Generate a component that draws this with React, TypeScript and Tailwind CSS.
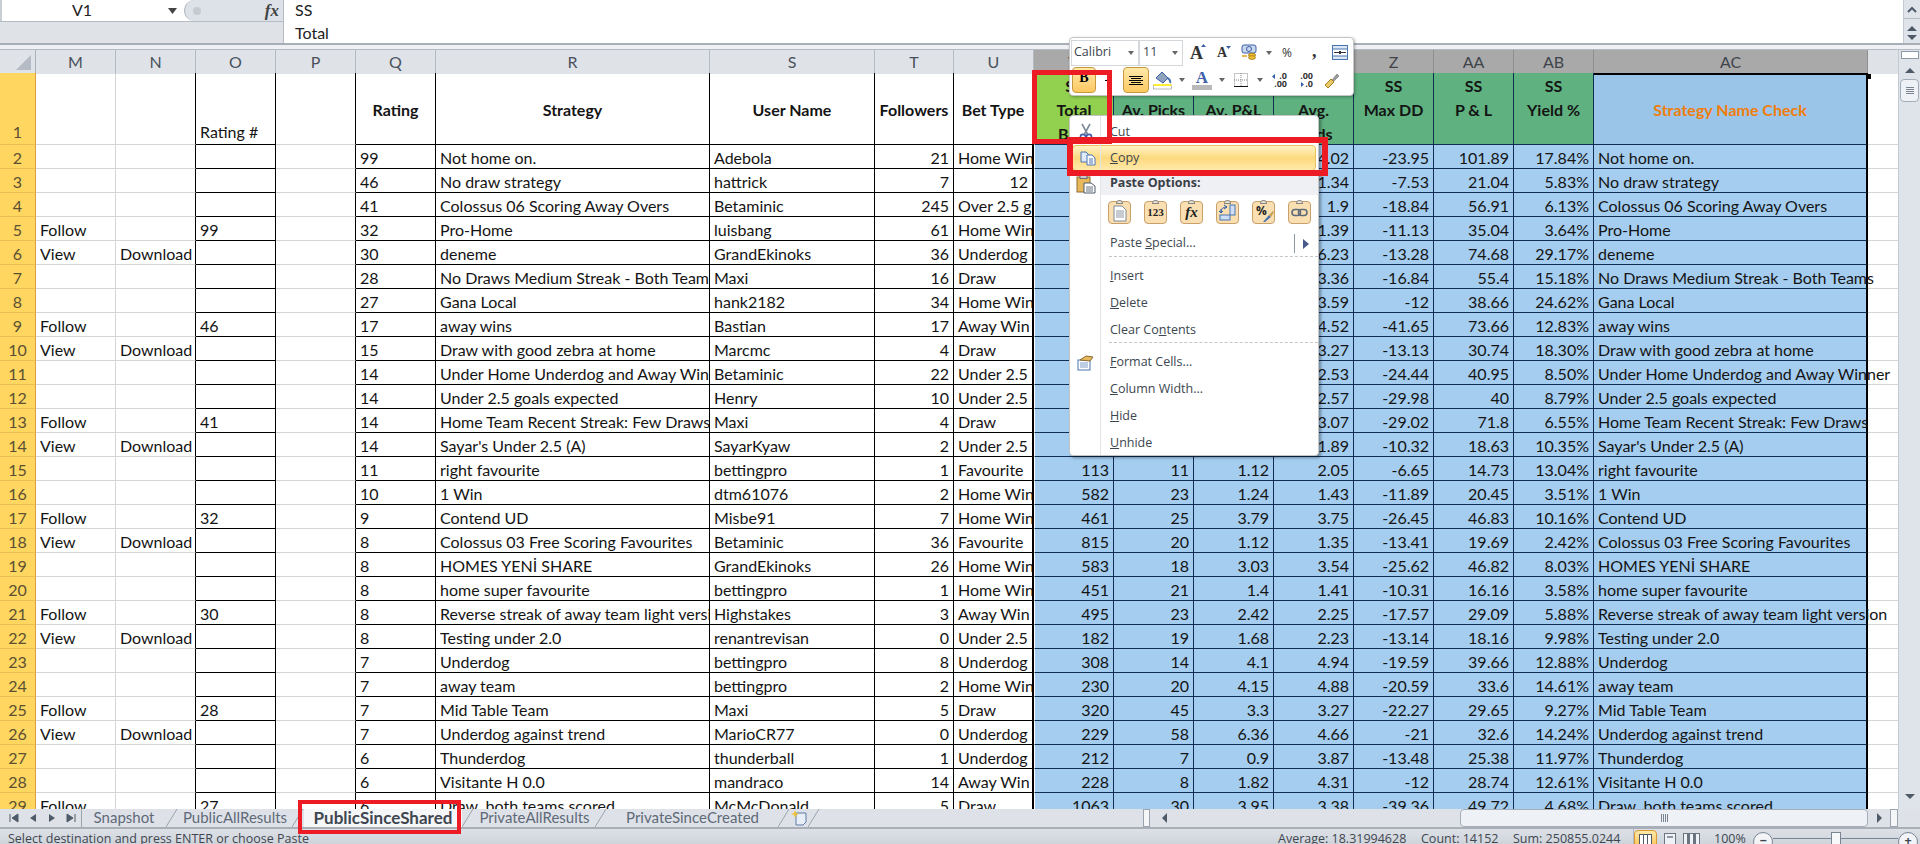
import React from "react";

// M N O P Q R S T U V W X Y Z AA AB AC
const rows: string[][] = [
  ["", "", "", "", "99", "Not home on.", "Adebola", "21", "Home Win", "", "", "", "4.02", "-23.95", "101.89", "17.84%", "Not home on."],
  ["", "", "", "", "46", "No draw strategy", "hattrick", "7", "12", "", "", "", "1.34", "-7.53", "21.04", "5.83%", "No draw strategy"],
  ["", "", "", "", "41", "Colossus 06 Scoring Away Overs", "Betaminic", "245", "Over 2.5 goals", "", "", "", "1.9", "-18.84", "56.91", "6.13%", "Colossus 06 Scoring Away Overs"],
  ["Follow", "", "99", "", "32", "Pro-Home", "luisbang", "61", "Home Win", "", "", "", "1.39", "-11.13", "35.04", "3.64%", "Pro-Home"],
  ["View", "Download", "", "", "30", "deneme", "GrandEkinoks", "36", "Underdog", "", "", "", "6.23", "-13.28", "74.68", "29.17%", "deneme"],
  ["", "", "", "", "28", "No Draws Medium Streak - Both Teams", "Maxi", "16", "Draw", "", "", "", "3.36", "-16.84", "55.4", "15.18%", "No Draws Medium Streak - Both Teams"],
  ["", "", "", "", "27", "Gana Local", "hank2182", "34", "Home Win", "", "", "", "3.59", "-12", "38.66", "24.62%", "Gana Local"],
  ["Follow", "", "46", "", "17", "away wins", "Bastian", "17", "Away Win", "", "", "", "4.52", "-41.65", "73.66", "12.83%", "away wins"],
  ["View", "Download", "", "", "15", "Draw with good zebra at home", "Marcmc", "4", "Draw", "", "", "", "3.27", "-13.13", "30.74", "18.30%", "Draw with good zebra at home"],
  ["", "", "", "", "14", "Under Home Underdog and Away Winner", "Betaminic", "22", "Under 2.5", "", "", "", "2.53", "-24.44", "40.95", "8.50%", "Under Home Underdog and Away Winner"],
  ["", "", "", "", "14", "Under 2.5 goals expected", "Henry", "10", "Under 2.5", "", "", "", "2.57", "-29.98", "40", "8.79%", "Under 2.5 goals expected"],
  ["Follow", "", "41", "", "14", "Home Team Recent Streak: Few Draws", "Maxi", "4", "Draw", "", "", "", "3.07", "-29.02", "71.8", "6.55%", "Home Team Recent Streak: Few Draws"],
  ["View", "Download", "", "", "14", "Sayar's Under 2.5 (A)", "SayarKyaw", "2", "Under 2.5", "", "", "", "1.89", "-10.32", "18.63", "10.35%", "Sayar's Under 2.5 (A)"],
  ["", "", "", "", "11", "right favourite", "bettingpro", "1", "Favourite", "113", "11", "1.12", "2.05", "-6.65", "14.73", "13.04%", "right favourite"],
  ["", "", "", "", "10", "1 Win", "dtm61076", "2", "Home Win", "582", "23", "1.24", "1.43", "-11.89", "20.45", "3.51%", "1 Win"],
  ["Follow", "", "32", "", "9", "Contend UD", "Misbe91", "7", "Home Win", "461", "25", "3.79", "3.75", "-26.45", "46.83", "10.16%", "Contend UD"],
  ["View", "Download", "", "", "8", "Colossus 03 Free Scoring Favourites", "Betaminic", "36", "Favourite", "815", "20", "1.12", "1.35", "-13.41", "19.69", "2.42%", "Colossus 03 Free Scoring Favourites"],
  ["", "", "", "", "8", "HOMES YENİ SHARE", "GrandEkinoks", "26", "Home Win", "583", "18", "3.03", "3.54", "-25.62", "46.82", "8.03%", "HOMES YENİ SHARE"],
  ["", "", "", "", "8", "home super favourite", "bettingpro", "1", "Home Win", "451", "21", "1.4", "1.41", "-10.31", "16.16", "3.58%", "home super favourite"],
  ["Follow", "", "30", "", "8", "Reverse streak of away team light version", "Highstakes", "3", "Away Win", "495", "23", "2.42", "2.25", "-17.57", "29.09", "5.88%", "Reverse streak of away team light version"],
  ["View", "Download", "", "", "8", "Testing under 2.0", "renantrevisan", "0", "Under 2.5", "182", "19", "1.68", "2.23", "-13.14", "18.16", "9.98%", "Testing under 2.0"],
  ["", "", "", "", "7", "Underdog", "bettingpro", "8", "Underdog", "308", "14", "4.1", "4.94", "-19.59", "39.66", "12.88%", "Underdog"],
  ["", "", "", "", "7", "away team", "bettingpro", "2", "Home Win", "230", "20", "4.15", "4.88", "-20.59", "33.6", "14.61%", "away team"],
  ["Follow", "", "28", "", "7", "Mid Table Team", "Maxi", "5", "Draw", "320", "45", "3.3", "3.27", "-22.27", "29.65", "9.27%", "Mid Table Team"],
  ["View", "Download", "", "", "7", "Underdog against trend", "MarioCR77", "0", "Underdog", "229", "58", "6.36", "4.66", "-21", "32.6", "14.24%", "Underdog against trend"],
  ["", "", "", "", "6", "Thunderdog", "thunderball", "1", "Underdog", "212", "7", "0.9", "3.87", "-13.48", "25.38", "11.97%", "Thunderdog"],
  ["", "", "", "", "6", "Visitante H 0.0", "mandraco", "14", "Away Win", "228", "8", "1.82", "4.31", "-12", "28.74", "12.61%", "Visitante H 0.0"],
  ["Follow", "", "27", "", "6", "Draw, both teams scored", "McMcDonald", "5", "Draw", "1063", "30", "3.95", "3.38", "-39.36", "49.72", "4.68%", "Draw, both teams scored"],
];

const GRID =
  "grid grid-cols-[36px_80px_80px_80px_80px_80px_274px_165px_79px_80px_80px_80px_80px_80px_80px_80px_80px_274px_30px]";

const colLetters = ["M", "N", "O", "P", "Q", "R", "S", "T", "U", "V", "W", "X", "Y", "Z", "AA", "AB", "AC"];

const BLACK = "border-r border-b border-black";
const LIGHT_B = "border-r border-r-black border-b border-b-[#d4d4d4]";
const BLUE = "bg-[#a4cdf0] border-r border-b border-[#0f2e50]";

const cellBorders = [
  "border-r border-b border-[#d4d4d4]",
  LIGHT_B,
  BLACK,
  LIGHT_B,
  BLACK,
  BLACK,
  BLACK,
  BLACK,
  "border-r-2 border-r-black border-b border-b-black",
  "bg-[#a4cdf0] border-l border-l-white border-r border-r-[#0f2e50] border-b border-b-[#0f2e50]",
  BLUE,
  BLUE,
  BLUE,
  BLUE,
  BLUE,
  BLUE,
  "bg-[#a4cdf0] border-r-2 border-r-black border-b border-b-[#0f2e50] relative z-10",
];

function isRight(i: number, v: string) {
  if (i === 7 || (i >= 9 && i <= 15)) return true;
  return i === 8 && /^\d+$/.test(v);
}

function Cell({ i, v }: { i: number; v: string }) {
  return (
    <div
      className={`h-6 px-1 leading-[25px] whitespace-nowrap ${cellBorders[i]} ${i === 16 ? "overflow-visible" : "overflow-hidden"} ${isRight(i, v) ? "text-right" : "text-left"}`}
    >
      {v}
    </div>
  );
}

function RowHead({ n, tall }: { n: number; tall?: boolean }) {
  return (
    <div
      className={`bg-[#ffd65f] border-r border-r-[#dd9f3e] border-b border-b-[#edbd57] text-[#5b5034] text-center leading-[25px] overflow-hidden ${tall ? "h-[72px] flex items-end justify-center" : "h-6"}`}
    >
      {n}
    </div>
  );
}

function HeadLines({ lines, className }: { lines: string[]; className: string }) {
  return (
    <div className={`h-[72px] font-bold text-center leading-6 overflow-hidden flex flex-col whitespace-nowrap ${className}`}>
      {lines.map((l) => (
        <span key={l}>{l}</span>
      ))}
    </div>
  );
}

function Sheet() {
  return (
    <div className="flex-1 overflow-hidden text-[16px] text-[#141414] bg-white">
      <div className={`${GRID} h-[23px]`}>
        <div className="bg-[#dfe3e8] border-r border-[#aab1b9] flex items-end justify-end pr-[4px] pb-[4px]">
          <svg width="15" height="15" viewBox="0 0 15 15">
            <path d="M15 0V15H0Z" fill="#b4bbc4" />
          </svg>
        </div>
        {colLetters.map((c, i) => (
          <div
            key={c}
            className={
              i < 9
                ? "bg-[#dfe3e8] border-r border-[#b4bbc4] text-center text-[#49515c] leading-[23px]"
                : "bg-[#a9a9a9] border-r border-r-[#8e8e8e] border-b border-b-[#7a3fa0] text-center text-[#3f444c] leading-[23px]"
            }
          >
            {c}
          </div>
        ))}
        <div className="bg-[#dfe3e8]" />
      </div>

      <div className={GRID}>
        <RowHead n={1} tall />
        <div className="h-[72px] border-r border-b border-[#d4d4d4]" />
        <div className="h-[72px] border-r border-r-black border-b border-b-[#d4d4d4]" />
        <div className="h-[72px] border-r border-b border-black flex items-end px-1 leading-[25px] overflow-hidden">Rating #</div>
        <div className="h-[72px] border-r border-r-black border-b border-b-[#d4d4d4]" />
        <HeadLines lines={["Rating"]} className="justify-center pt-0.5 border-r border-b border-black" />
        <HeadLines lines={["Strategy"]} className="justify-center pt-0.5 border-r border-b border-black" />
        <HeadLines lines={["User Name"]} className="justify-center pt-0.5 border-r border-b border-black" />
        <HeadLines lines={["Followers"]} className="justify-center pt-0.5 border-r border-b border-black" />
        <HeadLines lines={["Bet Type"]} className="justify-center pt-0.5 border-r-2 border-r-black border-b border-b-black" />
        <HeadLines lines={["SS", "Total", "Bets"]} className="pt-px bg-[#92d050] border-l border-l-white border-r border-b border-[#0f2e50]" />
        <HeadLines lines={["SS", "Av. Picks"]} className="pt-px bg-[#5fb17f] border-r border-b border-[#0f2e50]" />
        <HeadLines lines={["SS", "Av. P&L"]} className="pt-px bg-[#5fb17f] border-r border-b border-[#0f2e50]" />
        <HeadLines lines={["SS", "Avg.", "Odds"]} className="pt-px bg-[#5fb17f] border-r border-b border-[#0f2e50]" />
        <HeadLines lines={["SS", "Max DD"]} className="pt-px bg-[#5fb17f] border-r border-b border-[#0f2e50]" />
        <HeadLines lines={["SS", "P & L"]} className="pt-px bg-[#5fb17f] border-r border-b border-[#0f2e50]" />
        <HeadLines lines={["SS", "Yield %"]} className="pt-px bg-[#5fb17f] border-r border-b border-[#0f2e50]" />
        <HeadLines lines={["Strategy Name Check"]} className="justify-center bg-[#9bc5e8] text-[#f07d0c] border-r-2 border-r-black border-b border-b-[#0f2e50] border-t-2 border-t-black" />
        <div className="h-[72px] border-b border-[#d4d4d4]" />
      </div>

      {rows.map((r, idx) => (
        <div key={idx} className={GRID}>
          <RowHead n={idx + 2} />
          {r.map((v, i) => (
            <Cell key={i} i={i} v={v} />
          ))}
          <div className="h-6 border-b border-[#d4d4d4]" />
        </div>
      ))}
    </div>
  );
}

function Tri({ d, className = "fill-[#4f5a68]" }: { d: string; className?: string }) {
  return (
    <svg width="10" height="10" viewBox="0 0 10 10" className={className}>
      <path d={d} />
    </svg>
  );
}

function Caret({ className = "" }: { className?: string }) {
  return (
    <svg width="6" height="4" className={`fill-[#666] shrink-0 ${className}`}>
      <path d="M0 0H6L3 4Z" />
    </svg>
  );
}

function VScroll() {
  return (
    <div className="w-[22px] bg-[#dfe4ea] border-l border-[#c3cad2] flex flex-col items-center">
      <div className="w-[18px] h-2 mt-px border border-[#8e98a5] bg-white" />
      <div className="h-[17px] flex items-end">
        <Tri d="M5 2 10 7H0Z" />
      </div>
      <div className="w-[19px] h-[23px] mt-[3px] bg-[#eef1f5] border border-[#a4adb8] rounded-sm flex flex-col justify-center items-center gap-px">
        <div className="w-2 h-px bg-[#7b8592]" />
        <div className="w-2 h-px bg-[#7b8592]" />
        <div className="w-2 h-px bg-[#7b8592]" />
        <div className="w-2 h-px bg-[#7b8592]" />
      </div>
      <div className="flex-1" />
      <div className="h-[17px]">
        <Tri d="M0 2H10L5 7Z" />
      </div>
    </div>
  );
}

function FormulaBar() {
  return (
    <div className="h-[45px] shrink-0 flex bg-white border-b-2 border-[#a9afb7] text-[16px] text-[#222]">
      <div className="w-[284px] flex flex-col border-r border-[#b4bbc4]">
        <div className="h-[21px] flex items-center border-l-2 border-[#c9ced5]">
          <div className="w-[182px] relative h-full bg-white">
            <span className="absolute left-[70px] top-0 leading-[20px]">V1</span>
            <svg width="9" height="6" className="absolute left-[166px] top-[8px] fill-[#444]">
              <path d="M0 0H9L4.5 6Z" />
            </svg>
          </div>
          <div className="flex-1 h-full bg-[#dde2e8] rounded-l-[12px] border-l border-[#a9afb7] flex items-center justify-between pl-2 pr-1">
            <span className="w-2 h-2 rounded-full bg-[#c4cad2]" />
            <span className="[font-family:'Liberation_Serif',serif] italic font-bold text-[17px] text-[#444]">fx</span>
          </div>
        </div>
        <div className="flex-1 bg-[#dfe3e8] border-t border-[#b4bbc4]" />
      </div>
      <div className="flex-1 pl-[11px] leading-[20px]">
        <div className="h-[23px]">SS</div>
        <div>Total</div>
      </div>
      <div className="w-[17px] bg-[#dfe4ea] border-l border-[#c3cad2] flex flex-col items-center">
        <div className="h-[22px] border-b border-[#b4bbc4] w-full flex items-center justify-center">
          <svg width="10" height="7" fill="none" stroke="#4f5a68" strokeWidth="2">
            <path d="M1 6 5 2 9 6" />
          </svg>
        </div>
        <div className="mt-[4px] h-[10px]"><Tri d="M5 3 10 8H0Z" /></div>
        <div className="h-[10px]"><Tri d="M0 2H10L5 7Z" /></div>
      </div>
    </div>
  );
}

function TabSlash() {
  return (
    <svg width="12" height="18" className="shrink-0 stroke-[#9aa3ae]" fill="none">
      <path d="M0 18 11 0" />
    </svg>
  );
}

function Tab({ label, w, active }: { label: string; w: string; active?: boolean }) {
  return (
    <div className="flex items-center">
      <div
        className={`${w} h-[18px] text-center leading-[17px] whitespace-nowrap ${active ? "bg-[#f4f6f8] font-bold text-[17px] text-[#3f4650]" : "text-[#5f6a78]"}`}
      >
        {label}
      </div>
      <TabSlash />
    </div>
  );
}

function TabBar() {
  return (
    <div className="h-5 shrink-0 flex bg-[#dee2e8] border-b-2 border-b-[#a9afb7] text-[15px]">
      <div className="w-[81px] flex items-center pl-[9px] gap-[9px] shrink-0">
        <Tri d="M1 1V9M9 1 3 5 9 9Z" className="fill-[#4f5a68] stroke-[#4f5a68]" />
        <Tri d="M8 1V9L2 5Z" />
        <Tri d="M2 1V9L8 5Z" />
        <Tri d="M9 1V9M1 1 7 5 1 9Z" className="fill-[#4f5a68] stroke-[#4f5a68]" />
      </div>
      <div className="flex border-l border-[#9aa3ae]">
        <Tab label="Snapshot" w="w-[84px]" />
        <Tab label="PublicAllResults" w="w-[114px]" />
        <Tab label="PublicSinceShared" w="w-[158px]" active />
        <Tab label="PrivateAllResults" w="w-[121px]" />
        <Tab label="PrivateSinceCreated" w="w-[171px]" />
        <div className="w-[18px] flex items-center justify-center">
          <svg width="17" height="16" viewBox="0 0 17 16">
            <path d="M5 3H15V12L12 15H5Z" fill="#e8eef7" stroke="#5d7ba6" />
            <path d="M4 0 5 3 8 4 5 5 4 8 3 5 0 4 3 3Z" fill="#f2c230" />
          </svg>
        </div>
        <TabSlash />
      </div>
      <div className="flex-1" />
      <div className="w-[7px] bg-[#f4f6f8] border border-[#9aa3ae] shrink-0" />
      <div className="w-[10px]" />
      <div className="flex items-center">
        <Tri d="M7 0V10L2 5Z" />
      </div>
      <div className="w-[290px]" />
      <div className="w-[408px] h-[18px] bg-[#eef1f5] border border-[#a4adb8] rounded-sm flex items-center justify-center gap-px">
        <div className="w-px h-2 bg-[#7b8592]" />
        <div className="w-px h-2 bg-[#7b8592]" />
        <div className="w-px h-2 bg-[#7b8592]" />
        <div className="w-px h-2 bg-[#7b8592]" />
      </div>
      <div className="w-[22px] flex items-center justify-center">
        <Tri d="M3 0V10L8 5Z" />
      </div>
      <div className="w-[8px] bg-[#f4f6f8] border border-[#9aa3ae] shrink-0 mr-[22px]" />
    </div>
  );
}

function StatusBar() {
  return (
    <div className="h-[15px] shrink-0 overflow-hidden bg-gradient-to-b from-[#dde1e7] to-[#cfd4db] flex text-[12.5px] text-[#3f4650] whitespace-nowrap [font-family:'Open_Sans',sans-serif]">
      <div className="pl-2 pt-[2px] leading-[16px]">Select destination and press ENTER or choose Paste</div>
      <div className="flex-1" />
      <div className="flex pt-[2px] leading-[16px] w-[356px] border-r border-[#b4bbc4]">
        <span className="w-[143px]">Average: 18.31994628</span>
        <span className="w-[92px]">Count: 14152</span>
        <span>Sum: 250855.0244</span>
      </div>
      <div className="w-[80px] h-full flex pt-[1px]">
        <div className="w-[23px] h-[15px] bg-gradient-to-b from-[#ffe9a8] to-[#fdc860] border border-[#d69a30] rounded-t-sm pt-[3px] pl-[4px]">
          <div className="w-[13px] h-[12px] border border-[#4f5a68] bg-white flex">
            <div className="w-1 border-r border-[#4f5a68]" />
            <div className="w-1 border-r border-[#4f5a68]" />
          </div>
        </div>
        <div className="ml-[7px] mt-[3px] w-[12px] h-[14px] border border-[#6b7582] bg-[#eef1f5] p-[2px]">
          <div className="h-[2px] bg-[#8e98a5]" />
        </div>
        <div className="ml-[7px] mt-[3px] w-[17px] h-[14px] border border-[#6b7582] bg-[#eef1f5] flex justify-evenly">
          <div className="w-[3px] bg-[#6b7582]" />
          <div className="w-[3px] bg-[#6b7582]" />
        </div>
      </div>
      <div className="pt-[2px] leading-[16px] w-[39px]">100%</div>
      <div className="relative w-[167px] h-full">
        <div className="absolute left-0 top-[3px] w-[20px] h-[20px] rounded-full border border-[#7b8592] bg-[#f2f4f7] text-center leading-[15px] font-bold">−</div>
        <div className="absolute left-[20px] top-[9px] w-[125px] h-px bg-[#7b8592]" />
        <div className="absolute left-[78px] top-[3px] w-[10px] h-[14px] border border-[#7b8592] bg-[#f7f8fa]" />
        <div className="absolute left-[145px] top-[3px] w-[20px] h-[20px] rounded-full border border-[#7b8592] bg-[#f2f4f7] text-center leading-[15px] font-bold">+</div>
      </div>
    </div>
  );
}

function PasteIcon({ children }: { children: React.ReactNode }) {
  return (
    <div className="relative w-[23px] h-[23px] bg-[#f9dfb2] border border-[#c9a06a] rounded-sm flex items-center justify-center">
      <div className="absolute -top-[2px] left-[7px] w-[7px] h-[4px] bg-[#e4e2dc] border border-[#8f877a] rounded-t-sm" />
      {children}
    </div>
  );
}

function Item({ pre, u, post }: { pre: string; u: string; post: string }) {
  return (
    <span>
      {pre}
      <span className="underline">{u}</span>
      {post}
    </span>
  );
}

function MenuRow({ children, icon }: { children: React.ReactNode; icon?: React.ReactNode }) {
  return (
    <div className="h-[27px] flex items-center">
      <div className="w-[31px] flex justify-center">{icon}</div>
      <div className="pl-[9px]">{children}</div>
    </div>
  );
}

function ContextMenu() {
  return (
    <div className="absolute left-[1069px] top-[115px] w-[250px] h-[341px] z-20 bg-white border border-[#c6c6c6] rounded-sm shadow-[2px_2px_3px_rgba(0,0,0,0.35)] text-[12.5px] text-[#3c4650] [font-family:'Open_Sans',sans-serif]">
      <div className="absolute left-[30px] top-0 bottom-0 w-px bg-[#e2e4e7]" />
      <div className="h-[29px] pt-[3px] flex items-center">
        <div className="w-[31px] flex justify-center">
          <svg width="14" height="18" viewBox="0 0 14 18" fill="none" stroke="#3f5fa8" strokeWidth="1.6">
            <path d="M3 1 8.5 11M11 1 5.5 11" stroke="#7d8a99" />
            <circle cx="4" cy="14" r="2.6" />
            <circle cx="10" cy="14" r="2.6" />
          </svg>
        </div>
        <div className="pl-[9px]"><Item pre="Cu" u="t" post="" /></div>
      </div>
      <div className="h-[26px] mx-[2px] pt-px flex items-center bg-gradient-to-b from-[#fff3c4] via-[#fdd97e] to-[#ffe9a8] border border-[#e8c25a] rounded-sm">
        <div className="w-[29px] flex justify-center">
          <svg width="16" height="15" viewBox="0 0 16 15">
            <path d="M1 1H6L9 4V11H1Z" fill="#dfe9f7" stroke="#4a74b0" />
            <path d="M7 4H12L15 7V14H7Z" fill="#fff" stroke="#4a74b0" />
            <path d="M9 8H13M9 10H13M9 12H13" stroke="#4a74b0" />
          </svg>
        </div>
        <div className="pl-[8px]"><Item pre="" u="C" post="opy" /></div>
      </div>
      <div className="h-[23px] mt-px ml-[31px] bg-[#eef0f4] flex items-center pl-[9px] font-bold text-[#3a3f47]">Paste Options:</div>
      <div className="absolute left-[6px] top-[59px]">
        <svg width="20" height="19" viewBox="0 0 20 19">
          <rect x="1" y="2" width="13" height="15" fill="#e8b95c" stroke="#8a6a33" />
          <rect x="4" y="0.5" width="7" height="3" fill="#c8cdd4" stroke="#6d6d6d" />
          <path d="M8 8H15L19 11V18H8Z" fill="#fff" stroke="#4f5a68" />
          <path d="M10 12H17M10 14H17M10 16H17" stroke="#6b7582" />
        </svg>
      </div>
      <div className="h-[35px] pl-[38px] pt-[6px] flex gap-[13px]">
        <PasteIcon>
          <svg width="14" height="17" viewBox="0 0 14 17" className="mt-[2px]">
            <path d="M1 1H9L13 5V16H1Z" fill="#fff" stroke="#7d8a99" />
            <path d="M3 6H11M3 8H11M3 10H11M3 12H11" stroke="#8e98a5" />
          </svg>
        </PasteIcon>
        <PasteIcon>
          <span className="[font-family:'Liberation_Serif',serif] text-[11px] font-bold text-[#222] leading-none">123</span>
        </PasteIcon>
        <PasteIcon>
          <span className="[font-family:'Liberation_Serif',serif] italic font-bold text-[15px] text-[#222] leading-none">fx</span>
        </PasteIcon>
        <PasteIcon>
          <svg width="18" height="17" viewBox="0 0 18 17">
            <rect x="11" y="1" width="5" height="10" fill="#cfe0f5" stroke="#4a74b0" />
            <rect x="1" y="11" width="10" height="5" fill="#cfe0f5" stroke="#4a74b0" />
            <path d="M2 8Q2 3 8 3M5 1 8 3 5 5M2 5 2 9M0 7 2 9 4 7" stroke="#2f5fa8" fill="none" />
          </svg>
        </PasteIcon>
        <PasteIcon>
          <span className="text-[12px] font-bold text-[#222] leading-none -mt-[4px] -ml-[4px]">%</span>
          <svg width="12" height="12" viewBox="0 0 12 12" className="absolute right-0 bottom-0">
            <path d="M1 11 7 4 9 6 3 11Z" fill="#4a74b0" />
            <path d="M7 4 11 0 12 1 9 6Z" fill="#c8a050" />
          </svg>
        </PasteIcon>
        <PasteIcon>
          <svg width="17" height="9" viewBox="0 0 17 9" fill="none" stroke="#5d6a7a" strokeWidth="1.6">
            <rect x="1" y="1.5" width="8.5" height="6" rx="3" />
            <rect x="7.5" y="1.5" width="8.5" height="6" rx="3" />
          </svg>
        </PasteIcon>
      </div>
      <div className="h-[26px] pt-px flex items-center">
        <div className="w-[31px]" />
        <div className="pl-[9px] flex-1"><Item pre="Paste " u="S" post="pecial..." /></div>
        <div className="w-px h-[19px] bg-[#8e98a5] mr-[8px]" />
        <svg width="6" height="10" className="fill-[#4a5a8a] mr-[9px]">
          <path d="M0 0 6 5 0 10Z" />
        </svg>
      </div>
      <div className="ml-[39px] border-t border-dashed border-[#c6c6c6]" />
      <div className="pt-[6px] h-[85px]">
        <MenuRow><Item pre="" u="I" post="nsert" /></MenuRow>
        <MenuRow><Item pre="" u="D" post="elete" /></MenuRow>
        <MenuRow><Item pre="Clear Co" u="n" post="tents" /></MenuRow>
      </div>
      <div className="ml-[39px] border-t border-dashed border-[#c6c6c6]" />
      <div className="pt-[6px]">
        <MenuRow
          icon={
            <svg width="17" height="16" viewBox="0 0 17 16">
              <rect x="1" y="5" width="12" height="10" fill="#fff" stroke="#4a74b0" />
              <path d="M3 8H11M3 10H11M3 12H11" stroke="#7d9bc7" />
              <path d="M3 5 9 1 16 2 13 6Z" fill="#e8b95c" stroke="#8a6a33" />
            </svg>
          }
        >
          <Item pre="" u="F" post="ormat Cells..." />
        </MenuRow>
        <MenuRow><Item pre="" u="C" post="olumn Width..." /></MenuRow>
        <MenuRow><Item pre="" u="H" post="ide" /></MenuRow>
        <MenuRow><Item pre="" u="U" post="nhide" /></MenuRow>
      </div>
    </div>
  );
}

function MiniToolbar() {
  return (
    <div className="absolute left-[1069px] top-[37px] w-[285px] h-[59px] z-30 bg-white border border-[#c6c6c6] rounded-sm shadow-[1px_1px_3px_rgba(0,0,0,0.3)] text-[#3c4650] [font-family:'Open_Sans',sans-serif] text-[12.5px] p-[1px]">
      <div className="h-[27px] flex items-center">
        <div className="w-[68px] h-[26px] border border-[#d4d7dc] flex items-center justify-between pl-[2px] pr-[4px]">
          Calibri
          <Caret />
        </div>
        <div className="w-[44px] h-[26px] border border-[#d4d7dc] flex items-center justify-between pl-[3px] pr-[4px]">
          11
          <Caret />
        </div>
        <span className="ml-[7px] w-[15px] flex [font-family:'Liberation_Serif',serif] font-bold text-[18px] leading-none text-[#333]">
          A
          <svg width="5" height="3" className="fill-[#3f5fa8] shrink-0 -ml-[2px]"><path d="M2.5 0 5 3H0Z" /></svg>
        </span>
        <span className="ml-[12px] w-[12px] flex [font-family:'Liberation_Serif',serif] font-bold text-[14px] leading-none text-[#333]">
          A
          <svg width="5" height="3" className="fill-[#3f5fa8] shrink-0 -ml-[1px]"><path d="M0 0H5L2.5 3Z" /></svg>
        </span>
        <svg width="16" height="17" viewBox="0 0 16 17" className="ml-[12px] shrink-0">
          <rect x="1" y="1" width="14" height="8" rx="2" fill="#c8d8ec" stroke="#3f5fa8" />
          <circle cx="8" cy="5" r="2.5" fill="none" stroke="#3f5fa8" />
          <rect x="1" y="11" width="5" height="2" fill="#e8b95c" />
          <ellipse cx="11" cy="11" rx="3.5" ry="1.8" fill="#f2c230" stroke="#a8811c" />
          <ellipse cx="11" cy="13.5" rx="3.5" ry="1.8" fill="#f2c230" stroke="#a8811c" />
        </svg>
        <Caret className="ml-[9px]" />
        <span className="ml-[10px] w-[11px] text-[12px] leading-none text-[#333]">%</span>
        <span className="ml-[19px] w-[4px] [font-family:'Liberation_Serif',serif] font-bold text-[18px] text-[#333] leading-none -mt-[4px]">,</span>
        <svg width="16" height="15" viewBox="0 0 16 15" className="ml-[16px] shrink-0">
          <rect x="0.5" y="0.5" width="15" height="14" fill="#dce7f5" stroke="#4a74b0" />
          <rect x="1" y="4" width="14" height="7" fill="#fff" />
          <path d="M0 4H16M0 11H16" stroke="#4a74b0" />
          <path d="M2 7.5H14" stroke="#333" />
          <path d="M7 6H9V9H7Z" fill="#333" />
        </svg>
      </div>
      <div className="h-[27px] pt-px flex items-center">
        <div className="ml-px w-[24px] h-[26px] bg-gradient-to-b from-[#ffe9a8] to-[#fdc860] border border-[#c69a3c] rounded-sm text-center [font-family:'Liberation_Serif',serif] font-bold text-[14px] text-black leading-[20px]">B</div>
        <div className="ml-[9px] w-[6px] h-px bg-black" />
        <div className="ml-[12px] w-[26px] h-[26px] bg-gradient-to-b from-[#ffe9a8] to-[#fdc860] border border-[#c69a3c] rounded-sm flex flex-col items-center justify-center gap-px">
          <div className="w-[14px] h-px bg-black" />
          <div className="w-[10px] h-px bg-black" />
          <div className="w-[14px] h-px bg-black" />
          <div className="w-[10px] h-px bg-black" />
          <div className="w-[14px] h-px bg-black" />
        </div>
        <svg width="19" height="20" viewBox="0 0 19 20" className="ml-[4px] shrink-0">
          <path d="M3 8 9 2 15 8 10 13Z" fill="#8fa3bd" stroke="#3f5fa8" />
          <path d="M15 8Q18 11 17 13" stroke="#4a74b0" fill="none" strokeWidth="2" />
          <rect x="0.5" y="15" width="18" height="4" fill="#fff" stroke="#777" strokeWidth="0.5" />
          <rect x="0.5" y="14" width="18" height="2" fill="#ffee33" />
        </svg>
        <Caret className="ml-[7px]" />
        <div className="ml-[7px] w-[20px] text-center flex flex-col items-center leading-none shrink-0">
          <span className="[font-family:'Liberation_Serif',serif] font-bold text-[17px] text-[#3f5fa8] leading-[15px]">A</span>
          <span className="w-[20px] h-[5px] bg-[#b9b9b9]" />
        </div>
        <Caret className="ml-[7px]" />
        <svg width="14" height="14" className="ml-[9px] shrink-0">
          <rect x="0.5" y="0.5" width="13" height="13" fill="none" stroke="#888" strokeDasharray="1 1" />
          <path d="M0 13.5H14" stroke="#111" />
          <path d="M7 0V14M0 7H14" stroke="#888" strokeDasharray="1 1" />
        </svg>
        <Caret className="ml-[9px]" />
        <div className="ml-[7px] w-[17px] flex flex-col items-end text-[9px] font-bold leading-[8px] text-[#333] shrink-0">
          <span className="flex items-center gap-px">
            <svg width="6" height="5" className="fill-[#2f5fa8]"><path d="M0 2.5 3 0V5Z" /></svg>.0
          </span>
          <span>.00</span>
        </div>
        <div className="ml-[10px] w-[16px] flex flex-col items-end text-[9px] font-bold leading-[8px] text-[#333] shrink-0">
          <span>.00</span>
          <span className="flex items-center gap-px">
            <svg width="6" height="5" className="fill-[#2f5fa8]"><path d="M6 2.5 3 0V5Z" /></svg>.0
          </span>
        </div>
        <svg width="17" height="17" viewBox="0 0 17 17" className="ml-[10px] shrink-0">
          <path d="M9 8 14 2 16 4 10 10Z" fill="#9a9a9a" stroke="#666" strokeWidth="0.5" />
          <path d="M2 13 8 7 11 10 5 16Z" fill="#e8c868" stroke="#a8811c" />
        </svg>
      </div>
    </div>
  );
}

function Annotations() {
  return (
    <>
      <div className="absolute left-[1032px] top-[70px] w-[80px] h-[74px] border-[5px] border-[#ed1c24] z-40" />
      <div className="absolute left-[1067px] top-[137px] w-[261px] h-[39px] border-[6px] border-[#ed1c24] z-40" />
      <div className="absolute left-[298px] top-[800px] w-[163px] h-[34px] border-[4px] border-[#ed1c24] z-40" />
      <div className="absolute left-[1866px] top-[74px] w-[5px] h-[5px] bg-black z-10" />
    </>
  );
}

export default function App() {
  return (
    <div className="relative w-[1920px] h-[844px] overflow-hidden flex flex-col bg-white [font-family:Lato,'Liberation_Sans',sans-serif]">
      <FormulaBar />
      <div className="h-[5px] shrink-0 bg-[#eef0f3] border-b border-[#b4bbc4]" />
      <div className="h-[759px] shrink-0 flex overflow-hidden">
        <Sheet />
        <VScroll />
      </div>
      <TabBar />
      <StatusBar />
      <MiniToolbar />
      <ContextMenu />
      <Annotations />
    </div>
  );
}
